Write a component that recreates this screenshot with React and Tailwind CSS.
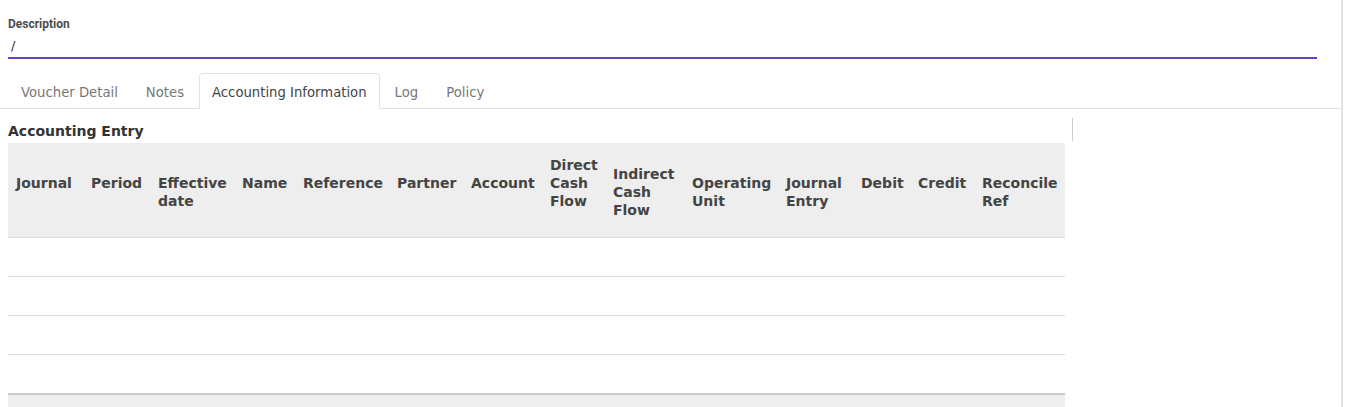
import React from "react";

const columns = [
  { w: 75, lines: ["Journal"], pad: true },
  { w: 67, lines: ["Period"], pad: true },
  { w: 84, lines: ["Effective", "date"] },
  { w: 61, lines: ["Name"], pad: true },
  { w: 94, lines: ["Reference"], pad: true },
  { w: 74, lines: ["Partner"], pad: true },
  { w: 79, lines: ["Account"], pad: true },
  { w: 63, lines: ["Direct", "Cash", "Flow"], pad: true },
  { w: 79, lines: ["Indirect", "Cash", "Flow"] },
  { w: 94, lines: ["Operating", "Unit"] },
  { w: 75, lines: ["Journal", "Entry"] },
  { w: 57, lines: ["Debit"], pad: true },
  { w: 64, lines: ["Credit"], pad: true },
  { w: 91, lines: ["Reconcile", "Ref"] },
];

const tabs = ["Voucher Detail", "Notes", "Accounting Information", "Log", "Policy"];

const Tab = ({ label, active }) => (
  <li
    className={
      active
        ? "mr-[2px] -mb-px h-[36px] rounded-t-[4px] border border-b-white border-[#dee2e6] bg-white px-[12px] pt-[11px] text-[#444]"
        : "mr-[2px] h-[35px] border border-transparent px-[12px] pt-[11px] text-[#777]"
    }
  >
    {label}
  </li>
);

const App = () => {
  return (
    <div className="flex h-[407px] overflow-hidden bg-white font-['DejaVu_Sans',sans-serif]">
      <div className="w-[1343px] shrink-0 border-r-2 border-[#e2e2e2]">
        {/* Description field */}
        <div className="pl-[8px] pr-[24px] pt-[17px]">
          <label className="block font-['Roboto',sans-serif] text-[12px] font-bold leading-[14px] text-[#4c4c4c]">
            Description
          </label>
          <div className="mt-[5px] h-[23px] border-b-2 border-[#6a3fbf] pl-[3px] text-[13px] leading-[20px] text-[#333]">
            /
          </div>
        </div>

        {/* Tabs */}
        <ul className="mt-[14px] flex border-b border-[#dee2e6] pl-[8px] text-[13.22px] leading-[16px]">
          {tabs.map((t) => (
            <Tab key={t} label={t} active={t === "Accounting Information"} />
          ))}
        </ul>

        {/* Accounting entry */}
        <div className="flex px-[8px] pt-[9px]">
          <div className="w-[1057px]">
            <h3 className="mt-[3px] text-[14px] font-bold leading-[20px] text-[#333]">
              Accounting Entry
            </h3>
            <div className="mt-[2px]">
              <div className="flex h-[95px] items-center border-b border-[#dddddd] bg-[#eeeeee] pt-[4px] text-[14px] font-bold leading-[18px] text-[#444]">
                {columns.map((c, i) => (
                  <div
                    key={i}
                    className={c.pad ? "whitespace-nowrap pb-[18px] pl-[8px]" : "whitespace-nowrap pl-[8px]"}
                    style={{ width: c.w }}
                  >
                    {c.lines.map((l, j) => (
                      <div key={j}>{l}</div>
                    ))}
                  </div>
                ))}
              </div>
              <div className="h-[39px] border-b border-[#dddddd]" />
              <div className="h-[39px] border-b border-[#dddddd]" />
              <div className="h-[39px] border-b border-[#dddddd]" />
              <div className="h-[38px]" />
              <div className="h-[40px] border-t-2 border-[#cccccc] bg-[#eeeeee]" />
            </div>
          </div>
          <div className="ml-[7px] h-[23px] w-px bg-[#cccccc]" />
        </div>
      </div>
    </div>
  );
};

export default App;
